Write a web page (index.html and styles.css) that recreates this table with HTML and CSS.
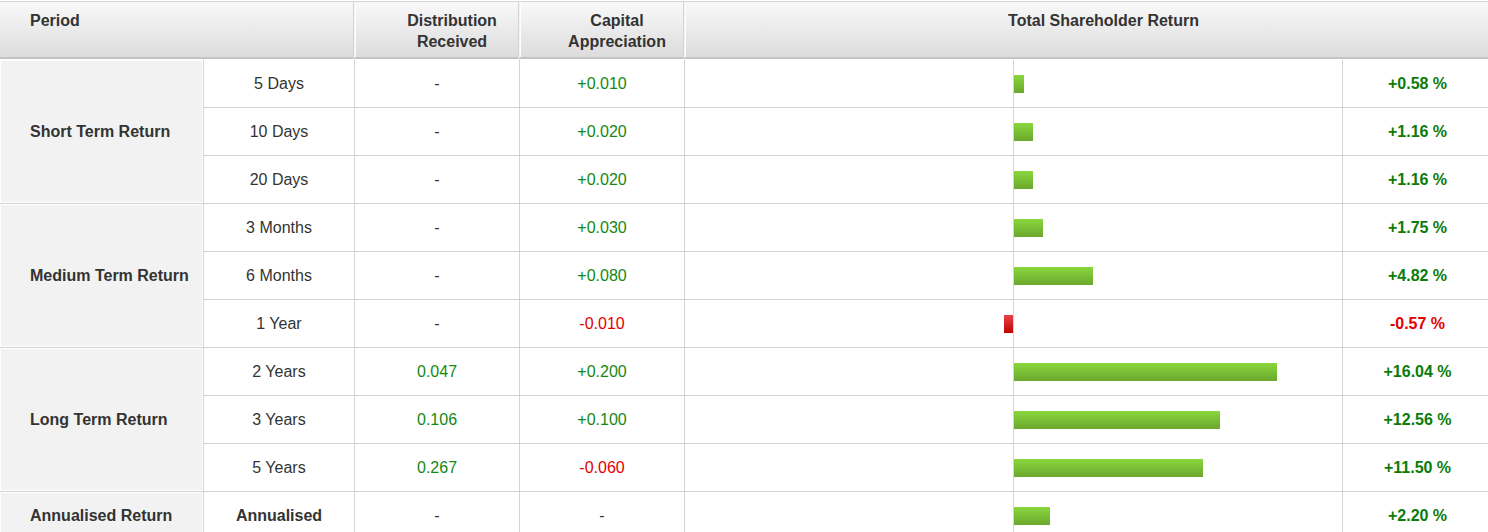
FILE: index.html
```html
<!DOCTYPE html>
<html lang="en">
<head>
<meta charset="utf-8">
<title>Total Shareholder Return</title>
<link rel="stylesheet" href="styles.css">
</head>
<body>
<table class="tsr">
  <colgroup>
    <col class="c-group"><col class="c-period"><col class="c-dist"><col class="c-cap"><col class="c-bar"><col class="c-pct">
  </colgroup>
  <thead>
    <tr>
      <th colspan="2" class="th-left">Period</th>
      <th class="th-sep">Distribution<br>Received</th>
      <th class="th-sep">Capital<br>Appreciation</th>
      <th colspan="2" class="th-sep th-wide">Total Shareholder Return</th>
    </tr>
  </thead>
  <tbody>
    <tr>
      <td rowspan="3" class="grp">Short Term Return</td>
      <td>5 Days</td><td>-</td><td class="pos">+0.010</td>
      <td class="bar"><div class="axis"><div class="neg-half"></div><div class="pos-half"><span class="b-pos" style="width:10px"></span></div></div></td>
      <td class="pct pos">+0.58 %</td>
    </tr>
    <tr>
      <td>10 Days</td><td>-</td><td class="pos">+0.020</td>
      <td class="bar"><div class="axis"><div class="neg-half"></div><div class="pos-half"><span class="b-pos" style="width:19px"></span></div></div></td>
      <td class="pct pos">+1.16 %</td>
    </tr>
    <tr>
      <td>20 Days</td><td>-</td><td class="pos">+0.020</td>
      <td class="bar"><div class="axis"><div class="neg-half"></div><div class="pos-half"><span class="b-pos" style="width:19px"></span></div></div></td>
      <td class="pct pos">+1.16 %</td>
    </tr>
    <tr>
      <td rowspan="3" class="grp">Medium Term Return</td>
      <td>3 Months</td><td>-</td><td class="pos">+0.030</td>
      <td class="bar"><div class="axis"><div class="neg-half"></div><div class="pos-half"><span class="b-pos" style="width:29px"></span></div></div></td>
      <td class="pct pos">+1.75 %</td>
    </tr>
    <tr>
      <td>6 Months</td><td>-</td><td class="pos">+0.080</td>
      <td class="bar"><div class="axis"><div class="neg-half"></div><div class="pos-half"><span class="b-pos" style="width:79px"></span></div></div></td>
      <td class="pct pos">+4.82 %</td>
    </tr>
    <tr>
      <td>1 Year</td><td>-</td><td class="neg">-0.010</td>
      <td class="bar"><div class="axis"><div class="neg-half"><span class="b-neg" style="width:9px"></span></div><div class="pos-half"></div></div></td>
      <td class="pct neg">-0.57 %</td>
    </tr>
    <tr>
      <td rowspan="3" class="grp">Long Term Return</td>
      <td>2 Years</td><td class="pos">0.047</td><td class="pos">+0.200</td>
      <td class="bar"><div class="axis"><div class="neg-half"></div><div class="pos-half"><span class="b-pos" style="width:263px"></span></div></div></td>
      <td class="pct pos">+16.04 %</td>
    </tr>
    <tr>
      <td>3 Years</td><td class="pos">0.106</td><td class="pos">+0.100</td>
      <td class="bar"><div class="axis"><div class="neg-half"></div><div class="pos-half"><span class="b-pos" style="width:206px"></span></div></div></td>
      <td class="pct pos">+12.56 %</td>
    </tr>
    <tr>
      <td>5 Years</td><td class="pos">0.267</td><td class="neg">-0.060</td>
      <td class="bar"><div class="axis"><div class="neg-half"></div><div class="pos-half"><span class="b-pos" style="width:189px"></span></div></div></td>
      <td class="pct pos">+11.50 %</td>
    </tr>
    <tr>
      <td class="grp">Annualised Return</td>
      <td class="strong">Annualised</td><td>-</td><td>-</td>
      <td class="bar"><div class="axis"><div class="neg-half"></div><div class="pos-half"><span class="b-pos" style="width:36px"></span></div></div></td>
      <td class="pct pos">+2.20 %</td>
    </tr>
  </tbody>
</table>
</body>
</html>
```

FILE: styles.css
```css
html, body {
  margin: 0;
  padding: 0;
  background: #fff;
}
body {
  padding-top: 1px;
  font-family: "Liberation Sans", Arial, sans-serif;
  font-size: 16px;
  color: #333;
}
.tsr {
  width: 1488px;
  table-layout: fixed;
  border-collapse: separate;
  border-spacing: 0;
}
.c-group { width: 203px; }
.c-period { width: 151px; }
.c-dist { width: 165px; }
.c-cap { width: 165px; }
.c-bar { width: 658px; }
.c-pct { width: 146px; }

.tsr thead th {
  height: 55px;
  box-sizing: border-box;
  padding: 8px 0 5px 30px;
  vertical-align: top;
  text-align: center;
  font-weight: bold;
  line-height: 21px;
  color: #333;
  background: linear-gradient(#f9f9f9, #dcdcdc);
  border-top: 1px solid #d6d6d6;
  border-bottom: 2px solid #c3c3c3;
}
.tsr thead th.th-left {
  text-align: left;
}
.tsr thead th.th-sep {
  border-left: 1px solid #f4f4f4;
  box-shadow: inset 1px 0 0 #fdfdfd, -1px 0 0 #d4d4d4;
}
.tsr thead th.th-wide {
  padding-left: 34px;
}
.tsr tbody tr:first-child td {
  border-top: 1px solid #fff;
}
.tsr tbody td {
  height: 47px;
  padding: 0;
  text-align: center;
  vertical-align: middle;
  border-left: 1px solid #d3d3d3;
  border-bottom: 1px solid #d3d3d3;
  line-height: 20px;
}
.tsr tbody td.grp {
  border-left: 0;
  background: #f2f2f2;
  box-shadow: inset 0 0 0 1px #fff;
  text-align: left;
  padding-left: 30px;
  font-weight: bold;
  color: #333;
}
.tsr tbody td.strong {
  font-weight: bold;
}
.pos { color: #138a13; }
.neg { color: #e40000; }
.tsr tbody td.pct {
  font-weight: bold;
  padding-left: 4px;
}
.tsr tbody td.pct.pos { color: #0a7c0a; }

.tsr tbody td.bar {
  padding: 0;
}
.axis {
  display: flex;
  height: 47px;
}
.neg-half {
  flex: 1;
  display: flex;
  justify-content: flex-end;
  align-items: center;
  border-right: 1px solid #d3d3d3;
}
.pos-half {
  flex: 1;
  display: flex;
  justify-content: flex-start;
  align-items: center;
}
.b-pos {
  display: block;
  height: 18px;
  background: linear-gradient(#8ad63e, #6aa72e);
}
.b-neg {
  display: block;
  height: 18px;
  background: linear-gradient(#e8444b, #c20000);
}
```
